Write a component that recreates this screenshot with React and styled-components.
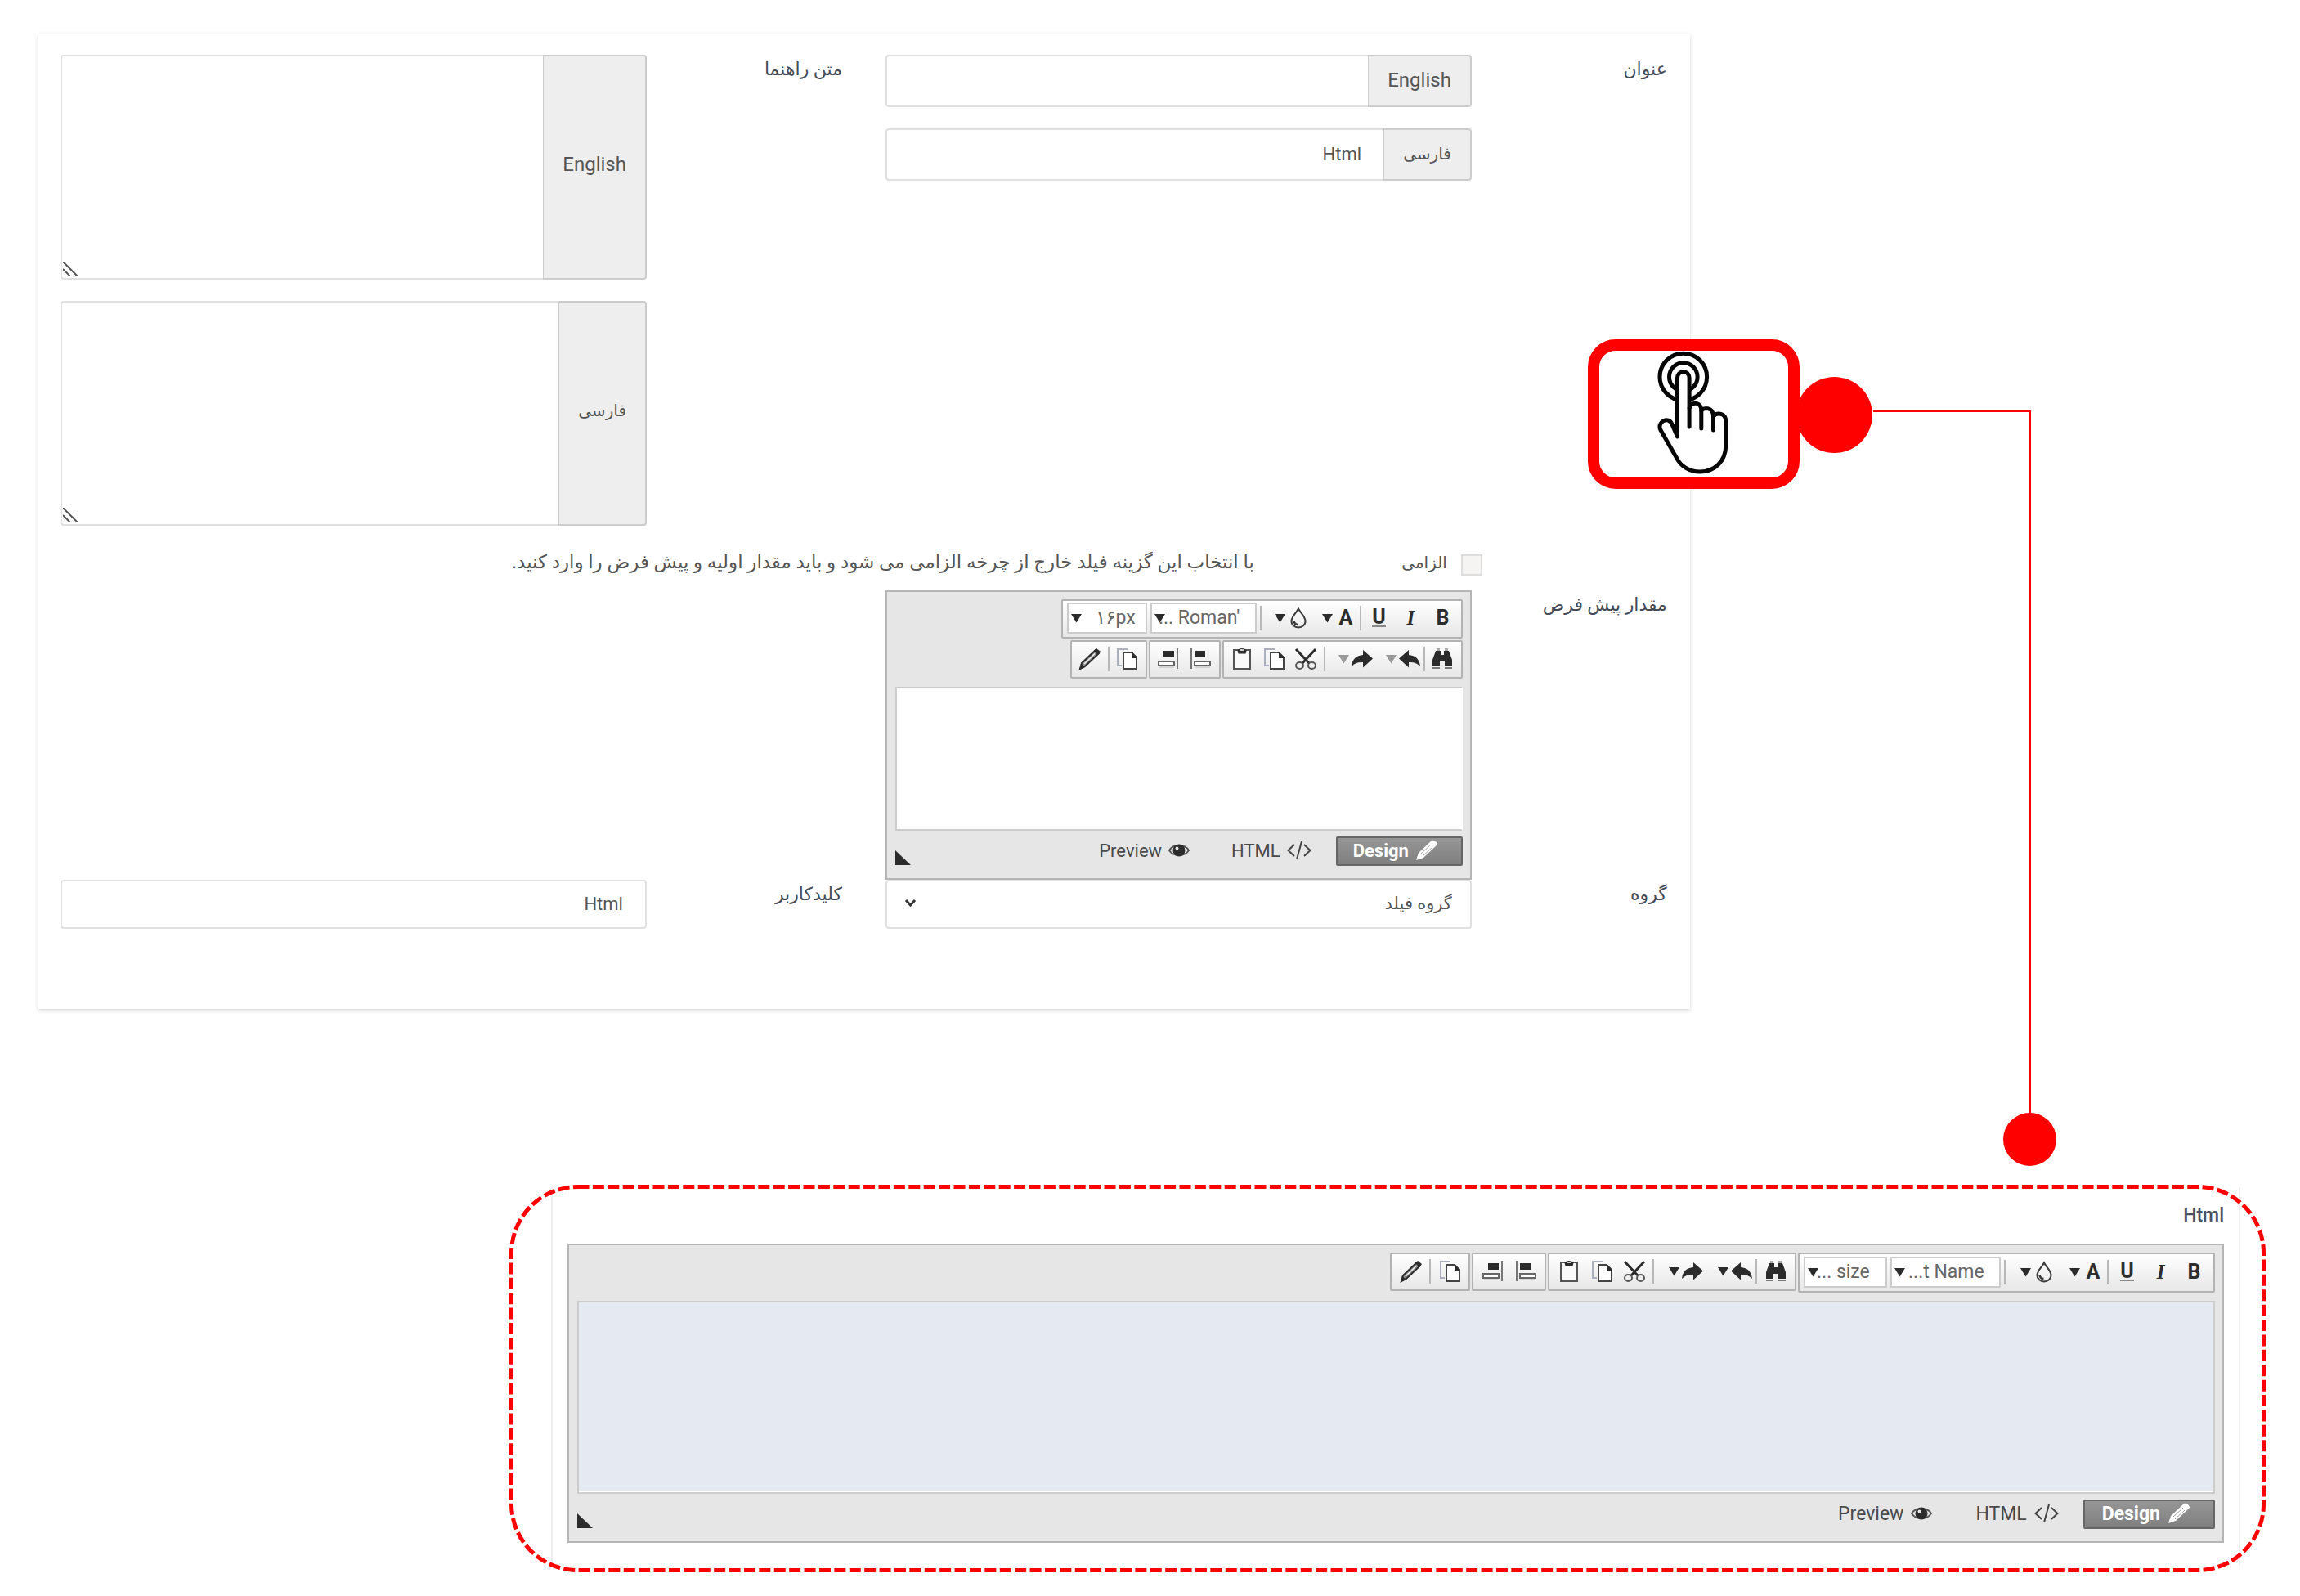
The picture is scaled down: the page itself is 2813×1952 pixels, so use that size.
import React from "react";
import styled, { createGlobalStyle } from "styled-components";

const Global = createGlobalStyle`
  * { box-sizing: border-box; }
  body { margin: 0; background: #fff; }
  body, button, input, select, textarea {
    font-family: Roboto, "DejaVu Sans", sans-serif;
    color: #555;
  }
`;

const Page = styled.main`
  padding: 41px 42px 29px 47px;
  font-size: 22px;
  line-height: 32px;
`;

/* ---------- settings card ---------- */

const Card = styled.section`
  position: relative;
  direction: rtl;
  width: 74.15%;
  padding: 26px 28px 98px 27px;
  box-shadow: 0 2px 5px rgba(0, 0, 0, 0.16);
`;

const Row = styled.div`
  display: grid;
  grid-template-columns: 1fr 1fr;
  column-gap: 53px;
`;

const Field = styled.div`
  display: grid;
  grid-template-columns: 1fr 3fr;
  align-items: start;
`;

const Caption = styled.label`
  color: #444b57;
  font-size: 22px;
  line-height: 36px;
  font-weight: ${(p) => (p.$strong ? 500 : 400)};
`;

const Stack = styled.div`
  display: flex;
  flex-direction: column;
  gap: 26px;
`;

const Group = styled.div`
  position: relative;
  display: flex;
  height: ${(p) => (p.$tall ? 275 : 64)}px;
`;

const Addon = styled.label`
  display: flex;
  align-items: center;
  padding: 0 23px ${(p) => (p.$tall ? 8 : 2)}px;
  background: #eee;
  border: 2px solid #ccc;
  border-left-width: 1px;
  border-radius: 0 4px 4px 0;
  font-size: ${(p) => (p.$latin ? 24 : 20)}px;
`;

const box = `
  flex: 1;
  min-width: 0;
  border: 2px solid #e0e0e0;
  background: #fff;
  font-size: 22px;
  outline: none;
`;

const TextInput = styled.input`
  ${box}
  height: ${(p) => (p.$alone ? "60px" : "auto")};
  padding: 0 27px 1px;
  border-radius: ${(p) => (p.$alone ? "4px" : "4px 0 0 4px")};
  border-right-width: ${(p) => (p.$alone ? 2 : 0)}px;
`;

const TextArea = styled.textarea`
  ${box}
  padding: 12px 26px;
  border-right-width: 0;
  border-radius: 4px 0 0 4px;
  resize: none;
`;

const Grip = styled.svg`
  position: absolute;
  left: 3px;
  bottom: 4px;
`;

const CheckRow = styled.div`
  display: flex;
  align-items: flex-start;
  padding: 35px 226px 18px 0;
`;

const CheckLabel = styled.label`
  display: flex;
  gap: 17px;
  flex: 0 0 279px;
  font-size: 20px;
  line-height: 20px;
`;

const CheckBox = styled.input`
  appearance: none;
  width: 26px;
  height: 26px;
  margin: 0;
  background: #f6f3f3;
  border: 2px solid #ddd;
`;

const Hint = styled.span`
  font-size: 23px;
  line-height: 20px;
  white-space: nowrap;
`;

const SelectWrap = styled.div`
  display: grid;
  align-items: center;
  > * { grid-area: 1 / 1; }
  > svg { justify-self: end; margin: 0 0 4px 23px; pointer-events: none; }
`;

const Select = styled.select`
  appearance: none;
  height: 60px;
  padding: 0 22px 2px;
  background: #fff;
  border: 2px solid #e0e0e0;
  border-radius: 4px;
  font-size: 21px;
`;

/* ---------- rich text editor ---------- */

const EditorBox = styled.div`
  direction: rtl;
  padding: 9px 9px 15px 10px;
  background: #e6e6e6;
  border: 2px solid #b5b5b5;
`;

const Tools = styled.div`
  display: flex;
  flex-wrap: wrap;
  align-items: flex-start;
  gap: 2px;
  margin-bottom: 10px;
`;

const ToolGroup = styled.div`
  display: flex;
  align-items: center;
  height: ${(p) => p.$height}px;
  padding: 0 3px 2px;
  background: linear-gradient(#fff, #e7e7e7);
  border: 2px solid #b3b3b3;
  border-radius: 2px;
`;

const Tool = styled.button`
  display: flex;
  align-items: center;
  justify-content: ${(p) => (p.$split ? "flex-start" : "center")};
  gap: 2px;
  width: ${(p) => p.$width}px;
  height: 36px;
  padding: 0 ${(p) => (p.$split ? 1 : 0)}px;
  border: 0;
  background: none;
  color: #2d2d2d;
  > :first-child { flex: 0 0 28px; }
`;

const Divider = styled.span`
  width: 2px;
  height: 30px;
  margin: 0 2px;
  background: #b8b8b8;
`;

const Letter = styled.span`
  color: #2d2d2d;
  font-family: ${(p) => (p.$serif ? '"Liberation Serif", serif' : "Roboto, sans-serif")};
  font-style: ${(p) => (p.$serif ? "italic" : "normal")};
  font-weight: 700;
  font-size: 25px;
  line-height: ${(p) => (p.$under ? 20 : 32)}px;
  text-align: center;
`;

const Underlined = styled.span`
  display: flex;
  justify-content: center;
  > span { border-bottom: 2px solid #888; }
`;

const Combo = styled.span`
  display: grid;
  align-items: center;
  width: ${(p) => p.$width}px;
  margin: 0 2px;
  > * { grid-area: 1 / 1; }
  > svg { justify-self: end; margin-left: 5px; pointer-events: none; }
`;

const ComboSelect = styled.select`
  appearance: none;
  direction: ltr;
  width: 100%;
  height: 38px;
  padding: 0 0 1px ${(p) => p.$indent}px;
  border: 2px solid #ccc;
  border-radius: 0;
  background: #fff;
  color: #666;
  font-size: ${(p) => p.$size}px;
`;

const Canvas = styled.textarea`
  display: block;
  width: 100%;
  height: ${(p) => (p.$filled ? 236 : 176)}px;
  border: 2px solid #ccc;
  border-right-color: ${(p) => (p.$filled ? "#ccc" : "#fff")};
  background: ${(p) => (p.$filled ? "#e4e9f2" : "#fff")};
  box-shadow: ${(p) => (p.$filled ? "inset 0 -2px #fff" : "none")};
  resize: none;
  outline: none;
`;

const Modes = styled.div`
  display: flex;
  align-items: flex-start;
  padding-top: 7px;
  > svg { margin: 17px auto 0 0; }
`;

const Mode = styled.button`
  display: flex;
  align-items: center;
  gap: ${(p) => (p.$large ? 9 : 8)}px;
  height: 36px;
  padding: 0 28px 2px ${(p) => (p.$large ? 21 : 19)}px;
  border: 2px solid ${(p) => (p.$active ? "#666" : "transparent")};
  border-radius: 2px;
  background: ${(p) => (p.$active ? "linear-gradient(#969696, #7f7f7f)" : "none")};
  color: ${(p) => (p.$active ? "#fff" : "#4a4a4a")};
  font-weight: ${(p) => (p.$active ? 700 : 400)};
  font-size: ${(p) => (p.$large ? 23 : 22)}px;
`;

/* ---------- callout ---------- */

const Callout = styled.div`
  position: absolute;
  top: 374px;
  right: -134px;
  display: flex;
  justify-content: center;
  width: 259px;
  height: 183px;
  border: 14px solid #f00;
  border-radius: 34px;
  background: #fff;
`;

const Connector = styled.div`
  position: absolute;
  top: 461px;
  left: calc(100% + 224px);
  width: 193px;
  height: 860px;
  border: solid #f00;
  border-width: 2px 2px 0 0;
`;

const Dot = styled.div`
  position: absolute;
  width: ${(p) => p.$size}px;
  height: ${(p) => p.$size}px;
  border-radius: 50%;
  background: #f00;
`;

const StartDot = styled(Dot)`
  top: 420px;
  left: calc(100% + 130px);
`;

const EndDot = styled(Dot)`
  top: 1320px;
  left: calc(100% + 383px);
`;

/* ---------- result ---------- */

const Result = styled.section`
  position: relative;
  margin: 215px 0 0 576px;
  padding: 3px 31px 8px 51px;
`;

const Dashes = styled.svg`
  position: absolute;
  inset: 0;
  width: 100%;
  height: 100%;
  rect {
    width: calc(100% - 5px);
    height: calc(100% - 5px);
  }
`;

const ResultBody = styled.div`
  direction: rtl;
  padding: 17px 18px 28px;
  border: solid #efefef;
  border-width: 0 2px;
`;

const ResultTitle = styled.h2`
  margin: 0 0 16px;
  color: #4b5063;
  font-weight: 500;
  font-size: 23px;
  line-height: 36px;
`;

/* ---------- icons ---------- */

const Ico = ({ children, w = 28, h = 28 }) => (
  <svg width={w} height={h} viewBox={`0 0 ${w} ${h}`} fill="none" aria-hidden="true">
    {children}
  </svg>
);

const Tri = ({ light }) => (
  <svg width="13" height="12" viewBox="0 0 13 12" aria-hidden="true">
    <path d="M0 1h13L6.5 11.5z" fill={light ? "#999" : "#2b2b2b"} />
  </svg>
);

const Drop = () => (
  <Ico>
    <path d="M14 2.5C11 8.500 5.500 12 5.500 18a8.500 7.500 0 0 0 17 0C22.500 12 17 8.500 14 2.500z" stroke="#3a3a3a" strokeWidth="2" />
    <path d="M8.500 17.500c.5 3 2.500 4.500 5 4.500" stroke="#3a3a3a" strokeWidth="2.500" />
  </Ico>
);

const Binoculars = () => (
  <Ico>
    <path d="M7 1h4v3H7zM17 1h4v3h-4z" fill="#aaa" />
    <path d="M6 4h6v5h4V4h6l4 11v8h-9v-6h-6v6H2v-8z" fill="#2b2b2b" />
    <path d="M2 25h9M17 25h9" stroke="#777" strokeWidth="2" />
  </Ico>
);

const Undo = () => (
  <Ico>
    <path d="M1 13.500 13 3v6c8 .5 13 5 14 14-4-4-8-5.500-14-5v6.500z" fill="#2b2b2b" />
  </Ico>
);

const Redo = () => (
  <Ico>
    <path d="M27 13.500 15 3v6C7 9.500 2 14 1 23c4-4 8-5.500 14-5v6.500z" fill="#2b2b2b" />
  </Ico>
);

const Scissors = () => (
  <Ico>
    <path d="M2 2l16 17M26 2 10 19" stroke="#2b2b2b" strokeWidth="3" />
    <ellipse cx="6.500" cy="22" rx="4.500" ry="4" stroke="#555" strokeWidth="2" />
    <ellipse cx="21.500" cy="22" rx="4.500" ry="4" stroke="#555" strokeWidth="2" />
  </Ico>
);

const Pages = () => (
  <Ico>
    <path d="M15 2H3v20h5" stroke="#a9afbd" strokeWidth="2" />
    <path d="M10 6h10l6 6v14H10z" fill="#fff" stroke="#444" strokeWidth="2" />
    <path d="M20 5v8h7z" fill="#2b2b2b" />
  </Ico>
);

const Clipboard = () => (
  <Ico>
    <path d="M4 3h20v23H4z" fill="#fafafa" stroke="#555" strokeWidth="2" />
    <path d="M8.500 3.500c1-3.500 10-3.500 11 0l-1 4h-9z" fill="#2b2b2b" />
    <path d="M12 3h4" stroke="#ccc" strokeWidth="2" />
  </Ico>
);

const AlignStart = () => (
  <Ico>
    <path d="M3 1v25" stroke="#777" strokeWidth="2" />
    <path d="M7 4h13v8H7z" fill="#2b2b2b" />
    <path d="M7 17h19v5H7z" fill="#fff" stroke="#666" strokeWidth="2" />
    <path d="M7 24h19" stroke="#bbb" strokeWidth="1" />
  </Ico>
);

const AlignEnd = () => (
  <Ico>
    <path d="M25 1v25" stroke="#777" strokeWidth="2" />
    <path d="M8 4h13v8H8z" fill="#2b2b2b" />
    <path d="M2 17h19v5H2z" fill="#fff" stroke="#666" strokeWidth="2" />
    <path d="M2 24h19" stroke="#bbb" strokeWidth="1" />
  </Ico>
);

const Brush = () => (
  <Ico>
    <path d="M2 26l2-7L21 3l4 4L8 23z" fill="#8a8a8a" stroke="#2b2b2b" strokeWidth="2" />
    <path d="M19 4l3-3 5 4-3 4zM1 27l2-7 5 4z" fill="#2b2b2b" />
    <path d="M7 20 20 7.500" stroke="#eee" strokeWidth="1.500" />
  </Ico>
);

const WhitePencil = () => (
  <Ico w={28} h={26}>
    <path d="M1 25l3-9L20 1c3-1 7 2 7 5L10 22z" fill="#fff" />
    <path d="M7 17 19 6M9 20 21 9" stroke="#a0a0a0" strokeWidth="1" />
  </Ico>
);

const Code = () => (
  <Ico w={30} h={24}>
    <path d="M9 5 1.500 12 9 19M21 5l7.500 7L21 19M18 1l-6 22" stroke="#444" strokeWidth="2" />
  </Ico>
);

const Eye = () => (
  <Ico w={26} h={18}>
    <path d="M1 9C6 1 20 1 25 9 20 17 6 17 1 9z" fill="#e6e6e6" stroke="#555" strokeWidth="2" />
    <circle cx="13" cy="9" r="7.500" fill="#2b2b2b" />
    <circle cx="10.500" cy="6.500" r="2" fill="#e6e6e6" />
  </Ico>
);

const Finger = () => (
  <svg width="100" height="160" viewBox="0 0 100 160" fill="none" stroke="#050505" strokeWidth="5" strokeLinecap="round" strokeLinejoin="round" aria-hidden="true">
    <circle cx="37.800" cy="32" r="28.800" />
    <circle cx="37.800" cy="32" r="17.300" />
    <path
      fill="#fff"
      d="M30.500 105V33a7.300 7.300 0 0 1 14.600 0V70C49 61 59.800 63 59.800 73C63 69 74.500 69 74.500 80C79 75 89.700 76 89.700 86V116C89.700 135 76 148 58 148C46 148 35 142 29.500 131L10 97C5 87 20 79 24 90Z"
    />
    <path d="M45.100 70V93M59.800 73V95M74.500 80V97" />
  </svg>
);

/* ---------- composed parts ---------- */

function ComboBox({ label, value, width, indent }) {
  return (
    <Combo $width={width}>
      <ComboSelect aria-label={label} $indent={indent} $size={23}>
        <option>{value}</option>
      </ComboSelect>
      <Tri />
    </Combo>
  );
}

function Editor({ label, id, large, font, size }) {
  const cell = large ? 41 : 39;
  const narrow = large ? 40 : 39;
  const split = large ? 60 : 58;
  return (
    <EditorBox>
      <Tools>
        <ToolGroup $height={large ? 49 : 48}>
          <Tool $width={cell} aria-label="Bold"><Letter>B</Letter></Tool>
          <Tool $width={cell} aria-label="Italic"><Letter $serif>I</Letter></Tool>
          <Tool $width={cell} aria-label="Underline">
            <Underlined><Letter $under>U</Letter></Underlined>
          </Tool>
          <Divider />
          <Tool $split $width={split} aria-label="Text color"><Letter>A</Letter><Tri /></Tool>
          <Tool $split $width={split} aria-label="Highlight"><Drop /><Tri /></Tool>
          <Divider />
          <ComboBox label="Font name" value={font} width={large ? 135 : 130} indent={large ? 20 : 8} />
          <ComboBox label="Font size" value={size} width={large ? 102 : 98} indent={large ? 14 : 33} />
        </ToolGroup>
        <ToolGroup $height={47}>
          <Tool $width={cell} aria-label="Find"><Binoculars /></Tool>
          <Divider />
          <Tool $split $width={split} aria-label="Undo"><Undo /><Tri light={!large} /></Tool>
          <Tool $split $width={split} aria-label="Redo"><Redo /><Tri light={!large} /></Tool>
          <Divider />
          <Tool $width={narrow} aria-label="Cut"><Scissors /></Tool>
          <Tool $width={narrow} aria-label="Copy"><Pages /></Tool>
          <Tool $width={cell} aria-label="Paste"><Clipboard /></Tool>
        </ToolGroup>
        <ToolGroup $height={47}>
          <Tool $width={narrow} aria-label="Left to right"><AlignStart /></Tool>
          <Tool $width={cell} aria-label="Right to left"><AlignEnd /></Tool>
        </ToolGroup>
        <ToolGroup $height={47}>
          <Tool $width={cell} aria-label="Copy format"><Pages /></Tool>
          <Divider />
          <Tool $width={cell} aria-label="Apply format"><Brush /></Tool>
        </ToolGroup>
      </Tools>
      <Canvas id={id} aria-label={label} $filled={large} />
      <Modes>
        <Mode $active $large={large}><WhitePencil />Design</Mode>
        <Mode $large={large}><Code />HTML</Mode>
        <Mode $large={large}><Eye />Preview</Mode>
        <svg width="19" height="18" viewBox="0 0 19 18" aria-hidden="true">
          <path d="M0 0v18h19z" fill="#2b2b2b" />
        </svg>
      </Modes>
    </EditorBox>
  );
}

function LangInput({ id, lang, latin, value = "" }) {
  return (
    <Group>
      <Addon htmlFor={id} $latin={latin}>{lang}</Addon>
      <TextInput id={id} defaultValue={value} />
    </Group>
  );
}

function LangArea({ id, lang, latin }) {
  return (
    <Group $tall>
      <Addon htmlFor={id} $latin={latin} $tall>{lang}</Addon>
      <TextArea id={id} />
      <Grip width="18" height="18" viewBox="0 0 18 18" aria-hidden="true">
        <path d="M0 0l18 18M0 9l9 9" stroke="#555" strokeWidth="2" />
      </Grip>
    </Group>
  );
}

export default function App() {
  return (
    <Page>
      <Global />
      <Card>
        <Row>
          <Field>
            <Caption htmlFor="title-en">عنوان</Caption>
            <Stack>
              <LangInput id="title-en" lang="English" latin />
              <LangInput id="title-fa" lang="فارسی" value="Html" />
            </Stack>
          </Field>
          <Field>
            <Caption htmlFor="help-en">متن راهنما</Caption>
            <Stack>
              <LangArea id="help-en" lang="English" latin />
              <LangArea id="help-fa" lang="فارسی" />
            </Stack>
          </Field>
        </Row>
        <CheckRow>
          <CheckLabel>
            <CheckBox type="checkbox" />
            الزامی
          </CheckLabel>
          <Hint>با انتخاب این گزینه فیلد خارج از چرخه الزامی می شود و باید مقدار اولیه و پیش فرض را وارد کنید.</Hint>
        </CheckRow>
        <Row>
          <Field>
            <Caption $strong htmlFor="default-value">مقدار پیش فرض</Caption>
            <Editor id="default-value" font="... Roman'" size="۱۶px" />
          </Field>
        </Row>
        <Row>
          <Field>
            <Caption $strong htmlFor="group">گروه</Caption>
            <SelectWrap>
              <Select id="group"><option>گروه فیلد</option></Select>
              <Ico w={15} h={11}>
                <path d="M2 2l5.500 6L13 2" stroke="#333" strokeWidth="3" />
              </Ico>
            </SelectWrap>
          </Field>
          <Field>
            <Caption $strong htmlFor="user-key">کلیدکاربر</Caption>
            <TextInput $alone id="user-key" defaultValue="Html" />
          </Field>
        </Row>
        <Callout><Finger /></Callout>
        <Connector />
        <StartDot $size={93} />
        <EndDot $size={65} />
      </Card>
      <Result>
        <ResultBody>
          <ResultTitle>Html</ResultTitle>
          <Editor large label="Html" font="...t Name" size="... size" />
        </ResultBody>
        <Dashes aria-hidden="true">
          <rect x="2.500" y="2.500" rx="81" fill="none" stroke="#f00" strokeWidth="5" strokeDasharray="14 4.400" />
        </Dashes>
      </Result>
    </Page>
  );
}
